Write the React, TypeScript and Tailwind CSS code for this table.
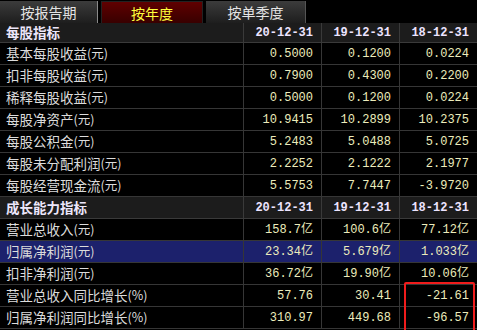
import React from "react";

type Row = { label: string; v: [string, string, string]; hl?: boolean };

const sec1: Row[] = [
  { label: "基本每股收益(元)", v: ["0.5000", "0.1200", "0.0224"] },
  { label: "扣非每股收益(元)", v: ["0.7900", "0.4300", "0.2200"] },
  { label: "稀释每股收益(元)", v: ["0.5000", "0.1200", "0.0224"] },
  { label: "每股净资产(元)", v: ["10.9415", "10.2899", "10.2375"] },
  { label: "每股公积金(元)", v: ["5.2483", "5.0488", "5.0725"] },
  { label: "每股未分配利润(元)", v: ["2.2252", "2.1222", "2.1977"] },
  { label: "每股经营现金流(元)", v: ["5.5753", "7.7447", "-3.9720"] },
];

const sec2: Row[] = [
  { label: "营业总收入(元)", v: ["158.7亿", "100.6亿", "77.12亿"] },
  { label: "归属净利润(元)", v: ["23.34亿", "5.679亿", "1.033亿"], hl: true },
  { label: "扣非净利润(元)", v: ["36.72亿", "19.90亿", "10.06亿"] },
  { label: "营业总收入同比增长(%)", v: ["57.76", "30.41", "-21.61"] },
  { label: "归属净利润同比增长(%)", v: ["310.97", "449.68", "-96.57"] },
];

const cjk = "font-['Noto_Sans_CJK_SC','Noto_Sans',sans-serif]";
const mono = "font-['Liberation_Mono','Noto_Sans_CJK_SC',monospace]";

function Label({ text }: { text: string }) {
  const i = text.indexOf("(");
  const main = i >= 0 ? text.slice(0, i) : text;
  const tail = i >= 0 ? text.slice(i) : "";
  return (
    <>
      {main}
      {tail && <span className="text-[12.5px]">{tail}</span>}
    </>
  );
}

function Header({ title, h }: { title: string; h: string }) {
  return (
    <div className={`grid grid-cols-[243px_78px_78px_78px] ${h} bg-[#1c1c1c] border-b border-[#3a3a3a]`}>
      <div className={`${cjk} pl-[6px] flex items-center text-[13.5px] font-bold text-[#ece6fa] leading-none`}>{title}</div>
      {["20-12-31", "19-12-31", "18-12-31"].map((d) => (
        <div key={d} className={`${mono} border-l border-[#3a3a3a] flex items-center justify-end pr-[8px] text-[12px] font-bold text-[#ece4ff] leading-none`}>
          {d}
        </div>
      ))}
    </div>
  );
}

function DataRow({ r }: { r: Row }) {
  return (
    <div className={`grid grid-cols-[243px_78px_78px_78px] h-[22px] border-b border-[#363636] ${r.hl ? "bg-[#1c216c]" : "bg-black"}`}>
      <div className={`${cjk} pl-[6px] flex items-center text-[13.5px] text-[#dcdcdc] leading-none`}>
        <Label text={r.label} />
      </div>
      {r.v.map((x, i) => (
        <div key={i} className={`${mono} border-l border-[#363636] flex items-center justify-end pr-[8px] text-[12px] text-[#ececbc] leading-none`}>
          {x}
        </div>
      ))}
    </div>
  );
}

export default function App() {
  return (
    <div className="relative w-[477px] h-[330px] bg-black overflow-hidden">
      <div className="flex h-[23px] items-end gap-[3px]">
        <div className={`${cjk} w-[98px] h-[22px] flex items-center justify-center text-[14px] text-[#e4e4e4] bg-gradient-to-b from-[#3c3c3c] to-[#1e1e1e] border-r border-[#8a8a8a] leading-none`}>
          按报告期
        </div>
        <div className={`${cjk} w-[102px] h-[22px] flex items-center justify-center text-[14px] text-[#ffff3c] bg-gradient-to-b from-[#600000] to-[#380000] border border-b-0 border-[#222] leading-none`}>
          按年度
        </div>
        <div className={`${cjk} w-[100px] h-[22px] flex items-center justify-center text-[14px] text-[#e4e4e4] bg-gradient-to-b from-[#3c3c3c] to-[#1e1e1e] border-r border-[#555] leading-none`}>
          按单季度
        </div>
      </div>
      <Header title="每股指标" h="h-[20px]" />
      {sec1.map((r) => (
        <DataRow key={r.label} r={r} />
      ))}
      <Header title="成长能力指标" h="h-[22px]" />
      {sec2.map((r) => (
        <DataRow key={r.label} r={r} />
      ))}
      <div className="absolute left-[404px] top-[282px] w-[71px] h-[50px] border-2 border-[#f01c1c] rounded-[2px]" />
    </div>
  );
}
